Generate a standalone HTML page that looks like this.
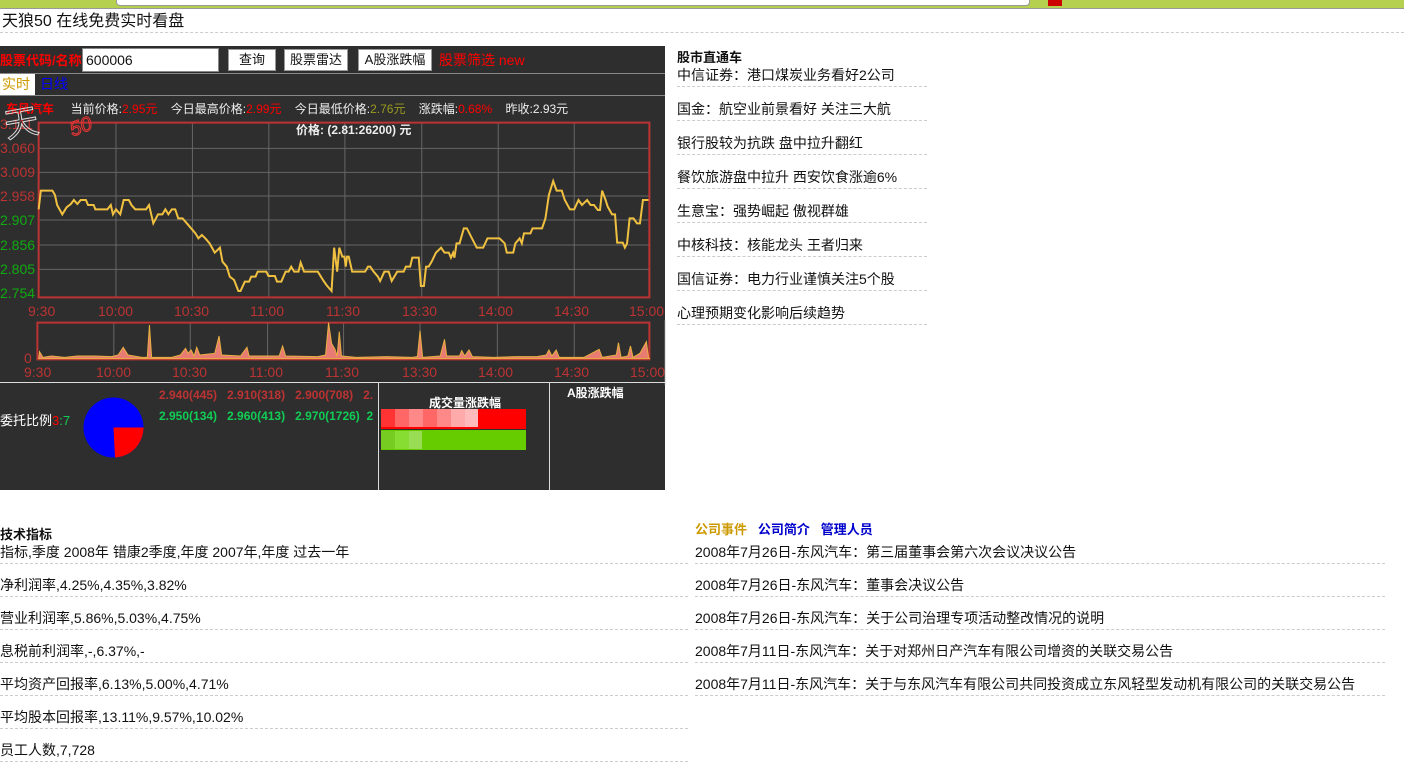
<!DOCTYPE html>
<html><head><meta charset="utf-8"><style>
*{margin:0;padding:0;box-sizing:border-box}
body{width:1404px;height:750px;overflow:hidden;background:#fff;font-family:"Liberation Sans","Noto Sans CJK SC",sans-serif;font-size:13px;color:#111;position:relative}
.a{position:absolute;white-space:nowrap}
.dash{border-bottom:1px dashed #ccc}
.lst{font-size:14px}
.btn{position:absolute;top:49px;height:22px;background:#fff;border:1px solid #999;font-size:13px;line-height:20px;text-align:center;color:#111}
</style></head><body>
<div class="a" style="left:0;top:0;width:1404px;height:9px;background:#b5cf4e;border-bottom:1px solid #999"></div>
<div class="a" style="left:116px;top:0;width:914px;height:6px;background:#fff;border:1px solid #999;border-top:none;border-radius:0 0 4px 4px"></div>
<div class="a" style="left:1048px;top:0;width:14px;height:6px;background:#c00"></div>
<div class="a dash" style="left:0;top:10px;width:1404px;height:23px;font-size:16px;line-height:24px;padding-left:2px">天狼50 在线免费实时看盘</div>

<div class="a" style="left:0;top:46px;width:665px;height:444px;background:#2e2e2e"></div>
<div class="a" style="left:0;top:52px;font-size:13px;color:#f00;font-weight:bold;line-height:18px">股票代码/名称:</div>
<div class="a" style="left:82px;top:48px;width:137px;height:24px;background:#fff;border:1px solid #888;font-size:14px;line-height:22px;padding-left:3px">600006</div>
<div class="btn" style="left:228px;width:48px">查询</div>
<div class="btn" style="left:284px;width:64px">股票雷达</div>
<div class="btn" style="left:358px;width:74px">A股涨跌幅</div>
<div class="a" style="left:439px;top:51px;color:#f00;font-size:14px;line-height:18px">股票筛选 new</div>
<div class="a" style="left:0;top:73px;width:665px;height:1px;background:#888"></div>
<div class="a" style="left:0;top:74px;width:35px;height:21px;background:#fff;color:#c90;font-size:14px;line-height:21px;padding-left:2px">实时</div>
<div class="a" style="left:40px;top:74px;color:#00f;font-size:14px;line-height:21px">日线</div>
<div class="a" style="left:0;top:95px;width:665px;height:1px;background:#888"></div>
<div class="a" style="left:6px;top:101px;font-size:12px;color:#eee;line-height:16px"><b style="color:#f00">东风汽车</b>&nbsp;&nbsp;&nbsp;&nbsp;&nbsp;当前价格:<span style="color:#f00">2.95元</span>&nbsp;&nbsp;&nbsp;&nbsp;今日最高价格:<span style="color:#f00">2.99元</span>&nbsp;&nbsp;&nbsp;&nbsp;今日最低价格:<span style="color:#9a9a20">2.76元</span>&nbsp;&nbsp;&nbsp;&nbsp;涨跌幅:<span style="color:#f00">0.68%</span>&nbsp;&nbsp;&nbsp;&nbsp;昨收:2.93元</div>

<svg class="a" style="left:0;top:110px" width="670" height="275" viewBox="0 0 1560 825" preserveAspectRatio="none">
<g stroke="#666" stroke-width="1" fill="none">
<path vector-effect="non-scaling-stroke" d="M90 115H1512M90 187H1512M90 258H1512M90 330H1512M90 405H1512M90 478H1512M270 38V562M448 38V562M626 38V562M803 38V562M982 38V562M1160 38V562M1337 38V562"/>
<path vector-effect="non-scaling-stroke" d="M265 638V748M443 638V748M623 638V748M800 638V748M978 638V748M1158 638V748M1337 638V748"/>
</g>
<rect x="90" y="38" width="1422" height="524" fill="none" stroke="#b33" stroke-width="2" vector-effect="non-scaling-stroke"/>
<rect x="87" y="638" width="1425" height="110" fill="none" stroke="#b33" stroke-width="2" vector-effect="non-scaling-stroke"/>
<path d="M1549 630V825" stroke="#ddd" vector-effect="non-scaling-stroke"/>
<polyline fill="none" stroke="#f0c040" stroke-width="2" vector-effect="non-scaling-stroke" points="90,298 95,242 122,242 128,255 133,285 145,313 155,292 165,282 172,270 180,282 188,270 200,270 205,285 218,285 222,298 250,298 258,285 263,313 270,298 280,313 288,270 300,270 306,285 315,298 340,298 347,285 357,340 368,313 378,313 385,298 392,313 400,298 408,298 415,325 425,325 435,340 445,355 455,370 462,385 470,375 478,385 488,400 500,428 512,413 518,455 528,470 535,500 545,510 555,543 560,543 570,515 580,515 585,500 595,500 600,485 620,485 625,498 640,498 645,515 655,515 665,485 672,485 678,470 685,485 695,485 700,458 708,485 740,485 752,510 760,525 772,543 778,413 785,485 790,413 797,440 802,440 805,470 808,440 812,440 820,485 850,485 857,470 862,470 870,485 880,500 885,513 895,485 905,485 912,513 925,485 940,485 945,470 955,470 960,443 975,443 980,528 987,528 992,470 998,470 1005,455 1015,428 1027,413 1035,428 1045,428 1050,443 1055,428 1058,443 1063,400 1070,400 1080,355 1087,355 1110,413 1125,413 1135,385 1163,385 1175,400 1180,428 1195,428 1200,400 1210,385 1215,400 1220,370 1235,370 1240,355 1262,355 1270,325 1278,255 1288,213 1296,242 1308,242 1315,270 1327,298 1337,298 1347,270 1355,285 1367,270 1375,285 1383,285 1392,300 1397,300 1402,242 1410,270 1415,290 1425,313 1432,313 1437,398 1450,398 1455,413 1460,400 1466,325 1475,325 1483,340 1490,340 1497,270 1510,270"/>
<polygon fill="#e87b72" stroke="#e8b040" stroke-width="1" vector-effect="non-scaling-stroke" points="90,746 92,725 100,742 120,738 150,742 180,738 220,738 260,740 275,735 287,712 298,735 330,742 343,742 348,645 353,742 400,742 420,735 432,715 438,730 445,720 452,738 458,712 465,735 500,730 510,678 516,735 560,738 575,712 580,738 650,738 658,708 665,738 740,740 758,735 765,638 772,700 780,718 785,738 790,665 795,738 830,742 900,740 960,742 972,740 978,662 984,742 1025,738 1035,688 1040,738 1070,738 1075,722 1082,738 1092,720 1100,740 1150,742 1200,740 1250,740 1272,735 1278,720 1285,738 1295,720 1302,742 1360,742 1385,725 1395,718 1402,742 1435,735 1440,698 1446,742 1462,738 1468,708 1474,742 1490,730 1505,695 1510,742 1512,746"/>
</svg>
<div class="a" style="left:0;top:116px;font-size:14px;line-height:16px;color:#b33">
<div class="a" style="left:0;top:0">3.111</div>
<div class="a" style="left:0;top:24px">3.060</div>
<div class="a" style="left:0;top:48px">3.009</div>
<div class="a" style="left:0;top:72px">2.958</div>
<div class="a" style="left:0;top:96px;color:#1a1">2.907</div>
<div class="a" style="left:0;top:121px;color:#1a1">2.856</div>
<div class="a" style="left:0;top:145px;color:#1a1">2.805</div>
<div class="a" style="left:0;top:169px;color:#1a1">2.754</div>
</div>
<div class="a" style="left:296px;top:121px;color:#eee;font-weight:bold;font-size:12px">价格: (2.81:26200) 元</div>
<div class="a" style="left:28px;top:303px;font-size:14px;color:#b33;width:640px;height:18px">
<span class="a" style="left:0">9:30</span><span class="a" style="left:70px">10:00</span><span class="a" style="left:146px">10:30</span><span class="a" style="left:222px">11:00</span><span class="a" style="left:298px">11:30</span><span class="a" style="left:374px">13:30</span><span class="a" style="left:450px">14:00</span><span class="a" style="left:526px">14:30</span><span class="a" style="left:601px">15:00</span></div>
<div class="a" style="left:24px;top:350px;font-size:14px;color:#b33">0</div>
<div class="a" style="left:24px;top:364px;font-size:14px;color:#b33;width:640px;height:18px">
<span class="a" style="left:0">9:30</span><span class="a" style="left:72px">10:00</span><span class="a" style="left:148px">10:30</span><span class="a" style="left:225px">11:00</span><span class="a" style="left:301px">11:30</span><span class="a" style="left:378px">13:30</span><span class="a" style="left:454px">14:00</span><span class="a" style="left:530px">14:30</span><span class="a" style="left:606px">15:00</span></div>
<div class="a" style="left:4px;top:96px;font-size:34px;color:transparent;-webkit-text-stroke:1px #ddd;font-family:serif;transform:rotate(-10deg)">天</div>
<div class="a" style="left:70px;top:116px;font-size:20px;color:transparent;-webkit-text-stroke:1px #e33;font-style:italic;transform:rotate(-20deg)">50</div>

<div class="a" style="left:0;top:382px;width:665px;height:1px;background:#ddd"></div>
<div class="a" style="left:378px;top:383px;width:1px;height:107px;background:#ddd"></div>
<div class="a" style="left:549px;top:383px;width:1px;height:107px;background:#ddd"></div>
<div class="a" style="left:0;top:410px;color:#fff;font-size:13px">委托比例<span style="color:#f00">3</span><span style="color:#1c5">:7</span></div>
<svg class="a" style="left:83px;top:397px" width="61" height="61"><ellipse cx="30.5" cy="30.5" rx="30" ry="30" fill="#00f"/><path d="M30.5 30.5H60.5A30 30 0 0 1 32 60.5Z" fill="#f00"/></svg>
<div class="a" style="left:159px;top:388px;font-weight:bold;font-size:12px;color:#b33;width:219px;overflow:hidden">2.940(445)&nbsp;&nbsp;&nbsp;2.910(318)&nbsp;&nbsp;&nbsp;2.900(708)&nbsp;&nbsp;&nbsp;2.</div>
<div class="a" style="left:159px;top:409px;font-weight:bold;font-size:12px;color:#1c5;width:219px;overflow:hidden">2.950(134)&nbsp;&nbsp;&nbsp;2.960(413)&nbsp;&nbsp;&nbsp;2.970(1726)&nbsp;&nbsp;2</div>
<div class="a" style="left:429px;top:394px;color:#fff;font-weight:bold;font-size:12px">成交量涨跌幅</div>
<div class="a" style="left:381px;top:409px;width:145px;height:20px;background:#f00"></div>
<div class="a" style="left:381px;top:409px;width:97px;height:18px;background:linear-gradient(90deg,#f33 0 14px,#f66 14px 28px,#f88 28px 42px,#f66 42px 56px,#f88 56px 70px,#faa 70px 84px,#fbb 84px 97px)"></div>
<div class="a" style="left:381px;top:430px;width:145px;height:20px;background:#6c0"></div>
<div class="a" style="left:381px;top:431px;width:41px;height:18px;background:linear-gradient(90deg,#7c2 0 14px,#8d3 14px 28px,#9d5 28px 41px)"></div>
<div class="a" style="left:567px;top:384px;color:#fff;font-weight:bold;font-size:12px">A股涨跌幅</div>

<div class="a" style="left:677px;top:47px;font-weight:bold;font-size:13px">股市直通车</div>
<div class="a lst" style="left:677px;top:65px;width:250px">
<div class="dash" style="height:22px;line-height:21px">中信证券：港口煤炭业务看好2公司</div>
<div class="dash" style="height:22px;line-height:21px;margin-top:12px">国金：航空业前景看好 关注三大航</div>
<div class="dash" style="height:22px;line-height:21px;margin-top:12px">银行股较为抗跌 盘中拉升翻红</div>
<div class="dash" style="height:22px;line-height:21px;margin-top:12px">餐饮旅游盘中拉升 西安饮食涨逾6%</div>
<div class="dash" style="height:22px;line-height:21px;margin-top:12px">生意宝：强势崛起 傲视群雄</div>
<div class="dash" style="height:22px;line-height:21px;margin-top:12px">中核科技：核能龙头 王者归来</div>
<div class="dash" style="height:22px;line-height:21px;margin-top:12px">国信证券：电力行业谨慎关注5个股</div>
<div class="dash" style="height:22px;line-height:21px;margin-top:12px">心理预期变化影响后续趋势</div>
</div>

<div class="a" style="left:0;top:524px;font-weight:bold;font-size:13px">技术指标</div>
<div class="a lst" style="left:0;top:542px;width:688px">
<div class="dash" style="height:22px;line-height:21px">指标,季度 2008年 错康2季度,年度 2007年,年度 过去一年</div>
<div class="dash" style="height:22px;line-height:21px;margin-top:11px">净利润率,4.25%,4.35%,3.82%</div>
<div class="dash" style="height:22px;line-height:21px;margin-top:11px">营业利润率,5.86%,5.03%,4.75%</div>
<div class="dash" style="height:22px;line-height:21px;margin-top:11px">息税前利润率,-,6.37%,-</div>
<div class="dash" style="height:22px;line-height:21px;margin-top:11px">平均资产回报率,6.13%,5.00%,4.71%</div>
<div class="dash" style="height:22px;line-height:21px;margin-top:11px">平均股本回报率,13.11%,9.57%,10.02%</div>
<div class="dash" style="height:22px;line-height:21px;margin-top:11px">员工人数,7,728</div>
</div>

<div class="a" style="left:695px;top:519px;font-weight:bold;font-size:13px"><span style="color:#c90">公司事件</span>&nbsp;&nbsp;&nbsp;<span style="color:#00c">公司简介</span>&nbsp;&nbsp;&nbsp;<span style="color:#00c">管理人员</span></div>
<div class="a lst" style="left:695px;top:542px;width:690px">
<div class="dash" style="height:22px;line-height:21px">2008年7月26日-东风汽车：第三届董事会第六次会议决议公告</div>
<div class="dash" style="height:22px;line-height:21px;margin-top:11px">2008年7月26日-东风汽车：董事会决议公告</div>
<div class="dash" style="height:22px;line-height:21px;margin-top:11px">2008年7月26日-东风汽车：关于公司治理专项活动整改情况的说明</div>
<div class="dash" style="height:22px;line-height:21px;margin-top:11px">2008年7月11日-东风汽车：关于对郑州日产汽车有限公司增资的关联交易公告</div>
<div class="dash" style="height:22px;line-height:21px;margin-top:11px">2008年7月11日-东风汽车：关于与东风汽车有限公司共同投资成立东风轻型发动机有限公司的关联交易公告</div>
</div>
</body></html>
